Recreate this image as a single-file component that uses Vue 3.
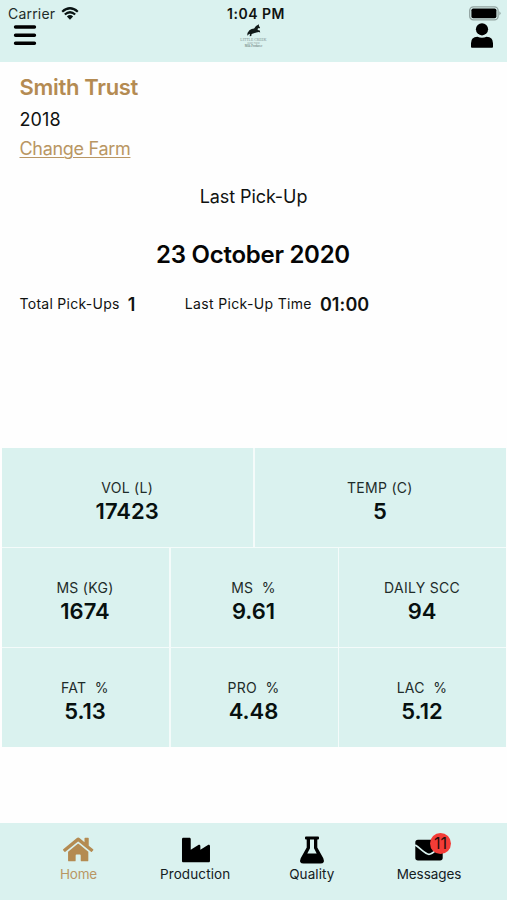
<script setup>
const stats = [
  { label: 'VOL (L)', value: '17423', wide: true },
  { label: 'TEMP (C)', value: '5', wide: true },
  { label: 'MS (KG)', value: '1674' },
  { label: 'MS \u00a0%', value: '9.61' },
  { label: 'DAILY SCC', value: '94' },
  { label: 'FAT \u00a0%', value: '5.13' },
  { label: 'PRO \u00a0%', value: '4.48' },
  { label: 'LAC \u00a0%', value: '5.12' }
]
</script>

<template>
  <div class="app">
    <header class="header">
      <div class="left">
        <div class="carrier">
          <span>Carrier</span>
          <svg class="wifi" viewBox="0 0 18 13">
            <path d="M1.2 4.7Q9-2.2 16.8 4.7M3.8 7.5Q9 3 14.2 7.5" fill="none" stroke="#091413" stroke-width="2.2" />
            <path d="M5.9 9.4Q9 6.8 12.1 9.4L9 12.7z" fill="#091413" />
          </svg>
        </div>
        <svg class="menu" viewBox="0 0 22 20">
          <path d="M2 2h18M2 9.7h18M2 17.4h18" stroke="#000" stroke-width="3.3" stroke-linecap="round" />
        </svg>
      </div>
      <div class="center">
        <div class="clock">1:04 PM</div>
        <svg class="horse" viewBox="0 0 14 13">
          <path d="M.3 11.7Q.2 8.2 2.4 6.2Q4.5 4.6 7.1 4.5L9 1.9L12 .2L11.9 2L13.1 3.6L12.2 4.4L11 4L10.6 6.1L12.8 6.6L13.2 8.6L11.8 8L9.4 8.4L6.2 9.4L4.6 10L4.3 12L2.7 12.3L3 9.8L1.5 10.4Z" fill="#111a19" />
        </svg>
        <div class="brand">LITTLE CREEK</div>
        <div class="brand-sub">DAIRY FARM</div>
        <div class="brand-foot">Milk Producer</div>
      </div>
      <div class="right">
        <svg class="battery" viewBox="0 0 32 15">
          <rect x=".7" y=".8" width="28.4" height="13.1" rx="3.7" fill="none" stroke="#91a3a0" stroke-width="1.3" />
          <rect x="2.4" y="2.5" width="25" height="9.7" rx="1.8" fill="#000" />
          <path d="M30.4 5.2Q32.8 7.3 30.4 9.6z" fill="#91a3a0" />
        </svg>
        <svg class="user" viewBox="0 0 22 25">
          <circle cx="11" cy="6.3" r="6.1" />
          <path d="M0 24V20.2Q0 13.7 6.4 13.7Q11 15.7 15.6 13.7Q22 13.7 22 20.2V24Q22 24.8 21 24.8H1Q0 24.8 0 24z" />
        </svg>
      </div>
    </header>

    <main class="main">
      <section class="farm">
        <h1>Smith Trust</h1>
        <div class="year">2018</div>
        <a class="change">Change Farm</a>
      </section>
      <section class="pickup">
        <div class="pickup-title">Last Pick-Up</div>
        <div class="pickup-date">23 October 2020</div>
        <div class="pickup-info">
          <span class="total">Total Pick-Ups</span><b class="count">1</b>
          <span class="time-label">Last Pick-Up Time</span><b class="time">01:00</b>
        </div>
      </section>
      <section class="stats">
        <div v-for="s in stats" :key="s.label" class="cell" :class="{ wide: s.wide }">
          <div class="label">{{ s.label }}</div>
          <div class="value">{{ s.value }}</div>
        </div>
      </section>
    </main>

    <nav class="tabs">
      <div class="tab active">
        <svg class="icon" viewBox="0 0 576 512">
          <path d="M280.37 148.26L96 300.11V464a16 16 0 0 0 16 16l112.06-.29a16 16 0 0 0 15.92-16V368a16 16 0 0 1 16-16h64a16 16 0 0 1 16 16v95.64a16 16 0 0 0 16 16.05L464 480a16 16 0 0 0 16-16V300L295.67 148.26a12.19 12.19 0 0 0-15.3 0zM571.6 251.47L488 182.56V44.05a12 12 0 0 0-12-12h-56a12 12 0 0 0-12 12v72.61L318.47 43a48 48 0 0 0-61 0L4.34 251.47a12 12 0 0 0-1.6 16.9l25.5 31A12 12 0 0 0 45.15 301l235.22-193.74a12.19 12.19 0 0 1 15.3 0L530.9 301a12 12 0 0 0 16.9-1.6l25.5-31a12 12 0 0 0-1.7-16.93z" />
        </svg>
        <span>Home</span>
      </div>
      <div class="tab">
        <svg class="icon" viewBox="-18 0 512 512">
          <path d="M475.115 163.781L336 252.309v-68.28c0-18.916-20.931-30.399-36.885-20.248L160 252.309V56c0-13.255-10.745-24-24-24H24C10.745 32 0 42.745 0 56v400c0 13.255 10.745 24 24 24h464c13.255 0 24-10.745 24-24V184.029c0-18.917-20.931-30.399-36.885-20.248z" />
        </svg>
        <span>Production</span>
      </div>
      <div class="tab">
        <svg class="icon" viewBox="0 0 28 28">
          <path fill-rule="evenodd" d="M8 .5H20Q21 .5 21 1.5V2.6Q21 3.6 20 3.6H19.3V11.5L25.3 22.2Q27.3 27.4 22.5 27.5H5.5Q.7 27.4 2.7 22.2L8.7 11.5V3.6H8Q7 3.6 7 2.6V1.5Q7 .5 8 .5ZM12 3.6V12.3L9.3 17.5H18.7L16 12.3V3.6Z" />
        </svg>
        <span>Quality</span>
      </div>
      <div class="tab messages">
        <div class="mail">
          <svg class="icon" viewBox="0 0 28 28">
            <rect x=".3" y="3.7" width="27.4" height="20.7" rx="2.7" />
            <path d="M.2 9.1C5.5 12.2 10.2 18.3 14 18.3S22.5 12.2 27.8 9.1" fill="none" stroke="#daf2ef" stroke-width="1.7" />
          </svg>
          <span class="badge">11</span>
        </div>
        <span>Messages</span>
      </div>
    </nav>
  </div>
</template>

<style>
body { margin: 0; background: #fff; }
</style>

<style scoped>
.app {
  width: 507px;
  height: 900px;
  display: flex;
  flex-direction: column;
  overflow: hidden;
  background: #fefefe;
  color: #101211;
  font-family: Inter, "Liberation Sans", sans-serif;
}
svg { display: block; }
.header {
  height: 62px;
  flex: none;
  display: grid;
  grid-template-columns: 1fr 1fr 1fr;
  background: #daf2ef;
}
.left { padding: 5px 0 0 8px; }
.carrier { display: flex; height: 18px; line-height: 18px; font-size: 14px; letter-spacing: .2px; color: #1e2c2a; }
.wifi { width: 18px; height: 13px; margin: 2px 0 0 6px; }
.menu { width: 24px; height: 21px; margin: 2px 0 0 5px; }
.center { display: flex; flex-direction: column; align-items: center; padding-top: 5px; white-space: nowrap; }
.clock { height: 18px; line-height: 18px; margin-left: 5px; font-size: 14px; font-weight: 600; letter-spacing: .5px; }
.horse { width: 14px; height: 13px; margin: 1px 0 2px; }
.brand { height: 3.2px; line-height: 3.2px; font-family: "Liberation Serif", serif; font-size: 3.8px; color: #7d908d; }
.brand-sub { height: 3px; line-height: 3px; font-size: 2px; color: #8a9c98; }
.brand-foot { height: 3px; line-height: 3px; font-family: "Liberation Serif", serif; font-size: 3px; color: #4d5f5c; }
.right { display: flex; flex-direction: column; align-items: flex-end; padding-top: 6px; }
.battery { width: 32px; height: 15px; margin-right: 6px; }
.user { width: 22px; height: 25px; margin: 2px 14px 0 0; }
.main { flex: 1; display: flex; flex-direction: column; }
.farm { height: 110px; padding: 11px 20px 0 19.5px; box-sizing: border-box; }
.farm h1 { margin: 0; font-size: 22px; line-height: 28px; font-weight: 600; letter-spacing: -.32px; color: #b48b52; }
.year { margin-top: 7px; font-size: 18px; line-height: 24px; letter-spacing: .1px; }
.change { display: block; width: max-content; margin-top: 4px; font-size: 18px; line-height: 26px; letter-spacing: -.3px; color: #b99663; text-decoration: underline; text-underline-offset: 2px; text-decoration-thickness: 1px; }
.pickup { height: 276px; }
.pickup-title { padding-top: 12px; text-align: center; font-size: 18px; line-height: 26px; letter-spacing: -.08px; }
.pickup-date { margin-top: 29px; padding-right: 1px; text-align: center; font-size: 24px; line-height: 32px; font-weight: 600; letter-spacing: -.27px; color: #050505; }
.pickup-info { display: flex; align-items: center; height: 24px; margin-top: 21px; padding-left: 19.5px; font-size: 14px; white-space: nowrap; }
.total { letter-spacing: .28px; }
.time-label { letter-spacing: .34px; }
.total, .time-label { margin-top: -1px; }
.count, .time { margin-left: 8px; font-size: 18px; font-weight: 600; }
.time { letter-spacing: .1px; }
.count { width: 57px; }
.stats {
  width: 504px;
  height: 299px;
  margin-left: 2px;
  display: grid;
  grid-template-columns: repeat(6, 1fr);
  grid-template-rows: repeat(3, 99px);
  column-gap: 1.5px;
  row-gap: 1px;
  background: #f4fbfa;
}
.cell { grid-column: span 2; padding: 29px 1px 0 0; text-align: center; background: #daf2ef; }
.cell.wide { grid-column: span 3; }
.label { font-size: 14px; line-height: 22px; color: #1e2c2a; letter-spacing: .28px; }
.value { font-size: 22px; line-height: 24px; font-weight: 600; color: #07100f; }
.tabs {
  height: 77px;
  flex: none;
  box-sizing: border-box;
  display: grid;
  grid-template-columns: repeat(4, 116.7px);
  justify-content: center;
  padding-top: 13px;
  background: #daf2ef;
}
.tab { display: flex; flex-direction: column; align-items: center; font-size: 13.5px; line-height: 20px; color: #14201e; letter-spacing: .1px; }
.icon { height: 28px; width: auto; fill: #000; overflow: visible; }
.tab.active { color: #b99663; letter-spacing: -.2px; }
.active .icon { fill: #b48b52; height: 27px; margin-bottom: 1px; }
.messages { letter-spacing: -.05px; padding-left: 1px; }
.mail { position: relative; }
.badge {
  position: absolute;
  left: 15px;
  top: -3px;
  width: 21px;
  height: 21px;
  border-radius: 50%;
  background: #f33c37;
  color: #240d0c;
  font-size: 16px;
  line-height: 21px;
  text-align: center;
}
</style>
